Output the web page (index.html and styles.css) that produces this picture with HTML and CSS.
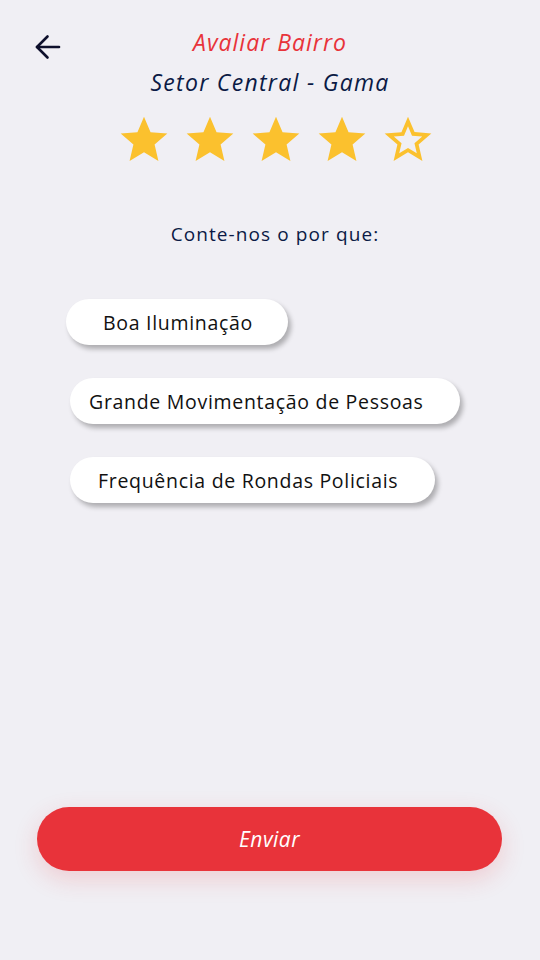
FILE: index.html
```html
<!DOCTYPE html>
<html lang="pt-BR">
<head>
<meta charset="utf-8">
<title>Avaliar Bairro</title>
<link rel="stylesheet" href="styles.css">
</head>
<body>
<main class="screen">
  <header class="header">
    <button class="back" aria-label="Voltar">
      <svg width="28" height="28" viewBox="0 0 28 28" fill="none" stroke="#0d0f2b" stroke-width="2.6" stroke-linecap="round" stroke-linejoin="round">
        <path d="M25 14H3"/>
        <path d="M13.5 3.5L3 14l10.5 10.5"/>
      </svg>
    </button>
    <div class="titles">
      <h1 class="title">Avaliar Bairro</h1>
      <h2 class="subtitle">Setor Central - Gama</h2>
    </div>
  </header>

  <div class="stars">
    <svg class="star" viewBox="0 0 24 24"><path d="M12 17.27L18.18 21l-1.64-7.03L22 9.24l-7.19-.61L12 2 9.19 8.63 2 9.24l5.46 4.73L5.82 21z"/></svg>
    <svg class="star" viewBox="0 0 24 24"><path d="M12 17.27L18.18 21l-1.64-7.03L22 9.24l-7.19-.61L12 2 9.19 8.63 2 9.24l5.46 4.73L5.82 21z"/></svg>
    <svg class="star" viewBox="0 0 24 24"><path d="M12 17.27L18.18 21l-1.64-7.03L22 9.24l-7.19-.61L12 2 9.19 8.63 2 9.24l5.46 4.73L5.82 21z"/></svg>
    <svg class="star" viewBox="0 0 24 24"><path d="M12 17.27L18.18 21l-1.64-7.03L22 9.24l-7.19-.61L12 2 9.19 8.63 2 9.24l5.46 4.73L5.82 21z"/></svg>
    <svg class="star" viewBox="0 0 24 24"><path d="M22 9.24l-7.19-.62L12 2 9.19 8.63 2 9.24l5.46 4.73L5.82 21 12 17.27 18.18 21l-1.63-7.03L22 9.24zM12 15.4l-3.76 2.27 1-4.28-3.32-2.88 4.38-.38L12 6.1l1.71 4.040 4.38.38-3.32 2.88 1 4.28L12 15.4z"/></svg>
  </div>

  <p class="prompt">Conte-nos o por que:</p>

  <ul class="chips">
    <li class="chip chip-1">Boa Iluminação</li>
    <li class="chip chip-2">Grande Movimentação de Pessoas</li>
    <li class="chip chip-3">Frequência de Rondas Policiais</li>
  </ul>

  <button class="submit">Enviar</button>
</main>
</body>
</html>
```
FILE: styles.css
```css
* { box-sizing: border-box; }

html, body {
  margin: 0;
  padding: 0;
  background: #f0eff4;
}

body {
  font-family: "Open Sans", "Noto Sans", sans-serif;
}

.screen {
  width: 540px;
  height: 960px;
  display: flex;
  flex-direction: column;
  padding: 0 0 89px 0;
}

.header {
  display: grid;
  grid-template-columns: 34px 1fr 34px;
  padding: 27px 0 0 0;
}

.back {
  grid-column: 1;
  justify-self: end;
  margin-top: 6px;
  width: 28px;
  height: 28px;
  padding: 0;
  border: 0;
  background: none;
  display: flex;
  margin-right: -28px;
}

.titles {
  grid-column: 2;
  display: flex;
  flex-direction: column;
  align-items: center;
}

.title {
  margin: 0;
  font-size: 23px;
  line-height: 30px;
  letter-spacing: 1px;
  font-weight: 400;
  font-style: italic;
  color: #e8333a;
}

.subtitle {
  margin: 10px 0 0 0;
  font-size: 23px;
  line-height: 30px;
  letter-spacing: 1.3px;
  font-weight: 400;
  font-style: italic;
  color: #0b1a45;
}

.stars {
  display: flex;
  justify-content: center;
  gap: 10px;
  margin: 15px 0 0 12px;
}

.star {
  width: 56px;
  height: 56px;
  fill: #fbc12e;
}

.prompt {
  margin: 53px 0 0 10px;
  text-align: center;
  font-size: 19px;
  line-height: 26px;
  letter-spacing: 1.1px;
  color: #0b1a45;
}

.chips {
  list-style: none;
  margin: 52px 0 0 0;
  padding: 0;
  display: flex;
  flex-direction: column;
  gap: 33px;
}

.chip {
  height: 46px;
  border-radius: 23px;
  background: #ffffff;
  box-shadow: 3px 4px 5px rgba(0, 0, 0, 0.28);
  display: flex;
  align-items: center;
  font-size: 19.5px;
  letter-spacing: 0.7px;
  color: #111111;
  white-space: nowrap;
}

.chip-1 {
  margin-left: 66px;
  width: 222px;
  padding-left: 37px;
}

.chip-2 {
  margin-left: 70px;
  width: 390px;
  padding-left: 19px;
}

.chip-3 {
  margin-left: 70px;
  width: 365px;
  padding-left: 28px;
}

.submit {
  margin: auto 38px 0 37px;
  height: 64px;
  border: 0;
  border-radius: 32px;
  background: #e8333a;
  color: #ffffff;
  font-family: "Open Sans", "Noto Sans", sans-serif;
  font-size: 21px;
  letter-spacing: 0.5px;
  font-style: italic;
  box-shadow: 0 8px 24px rgba(232, 51, 58, 0.18);
}
```
